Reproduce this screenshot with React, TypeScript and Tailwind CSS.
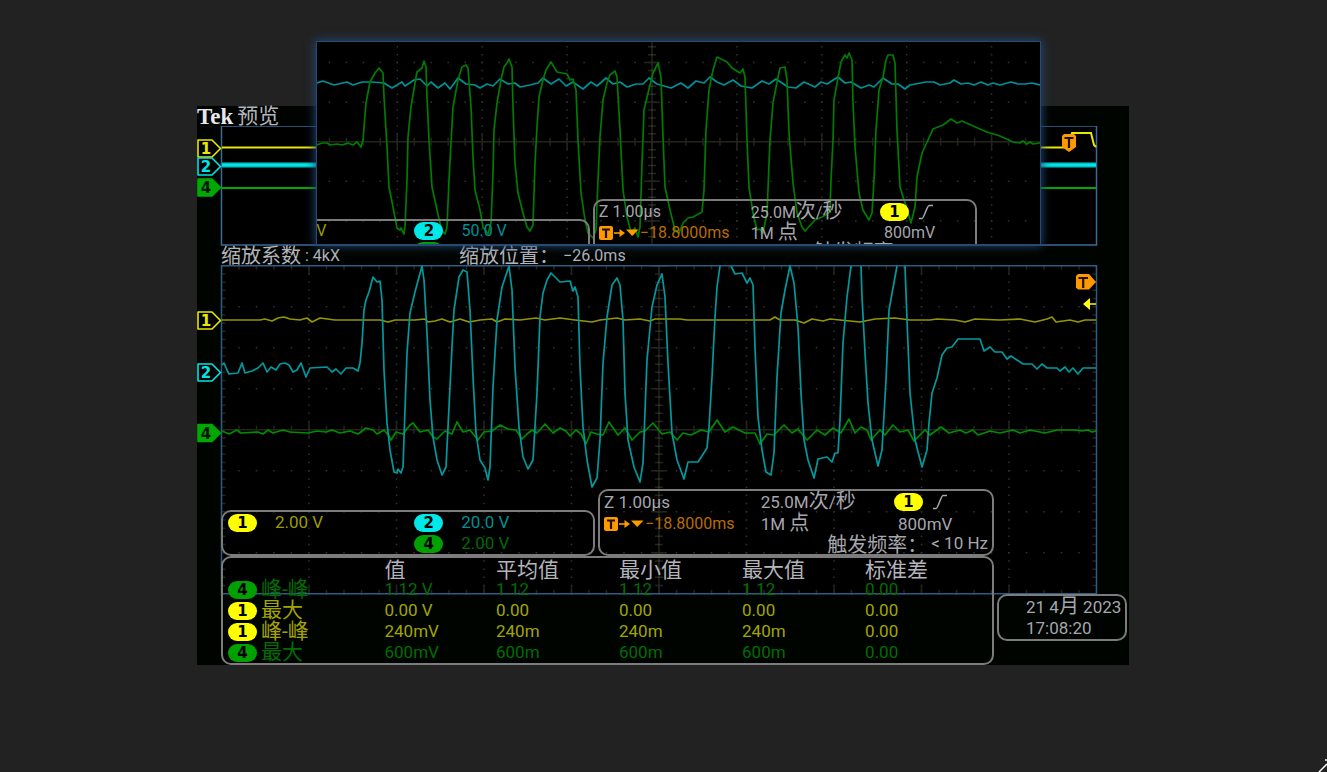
import type { ReactNode } from 'react';
import clsx from 'clsx';

const COLORS = {
  yellow: '#e8e800',
  cyan: '#00e5e5',
  green: '#00a800',
  orange: '#ff9900',
};

type Channel = 1 | 2 | 4;

const MAIN_CH1 =
  '222,320 260,320 265,319 272,321 278,318 284,317 290,319 300,320 307,318 312,322 320,318 335,320 360,320 380,320 388,322 395,320 415,320 425,319 428,322 435,321 442,319 450,322 460,319 469,322 480,320 492,319 497,322 505,319 520,320 536,318 545,320 560,318 575,320 592,322 600,320 617,318 625,320 640,319 650,321 655,319 680,319 687,320 770,320 775,317 780,320 795,320 804,323 812,319 823,321 830,319 860,322 875,319 895,318 910,320 930,320 937,319 955,320 965,322 975,319 1000,320 1020,319 1035,322 1047,319 1052,317 1056,322 1070,320 1078,322 1085,320 1096,320';

const MAIN_CH2 = [
  '222,365 224,363 227,370 229,374 238,373 242,363 245,373 252,371 258,368 263,363 267,372 271,367 276,370 280,364 285,363 289,365 293,372 297,370 301,363 306,377 310,368 327,367 332,372 336,369 341,374 346,368 353,368 358,371 360,363 362,343 364,310 366,300 369,292 373,277 377,282 380,281 382,300 384,370 387,423 390,450 394,472 397,473 398,469 401,473 403,467 405,410 407,353 410,313 415,292 422,266 424,280 427,333 430,400 433,437 437,460 442,475 446,467 448,427 452,347 454,310 459,277 463,270 467,272 470,310 473,377 476,433 480,460 485,468 488,480 490,467 493,387 497,320 502,287 509,266 512,290 515,367 519,427 523,457 528,469 533,460 537,393 540,317 543,293 547,280 551,273 560,282 570,281 573,291 575,287 578,297 580,367 583,427 587,460 592,487 597,478 600,440 603,363 607,317 612,285 617,278 620,285 623,320 625,393 628,440 634,467 640,482 643,463 647,360 652,307 657,285 662,274 665,297 668,363 672,433 677,460 684,479 688,462 698,462 707,448 709,427 712,377 715,317 717,287 720,266',
  '731,266 735,274 742,273 747,283 750,278 753,285 755,347 758,417 762,450 766,472 771,475 774,453 777,377 781,313 785,290 790,266 794,283 798,327 801,393 804,440 808,460 814,478 818,459 827,457 832,462 835,453 838,453 840,420 843,343 847,297 851,266',
  '861,266 862,297 865,353 868,403 872,440 878,466 882,450 886,380 889,310 897,266',
  '905,266 907,320 910,393 915,440 922,467 927,450 929,423 932,393 937,378 942,355 947,348 952,347 958,339 980,339 984,351 990,347 995,352 1002,352 1007,359 1011,356 1023,364 1032,364 1037,369 1042,364 1047,368 1057,368 1060,371 1065,367 1069,372 1073,368 1078,374 1083,368 1096,368',
];

const MAIN_CH4 =
  '222,431 229,434 237,430 241,433 258,432 263,434 268,430 273,433 283,430 290,432 308,433 317,431 326,432 332,430 340,433 350,431 358,434 366,428 373,430 377,434 384,430 389,436 391,440 396,432 403,434 410,425 413,423 420,432 428,430 433,437 437,439 445,431 452,434 457,422 463,432 470,430 478,440 484,432 492,431 500,425 508,429 516,430 522,439 527,434 532,430 537,433 545,424 553,433 560,428 566,431 570,436 576,430 581,434 586,444 591,432 597,434 603,435 609,422 618,435 625,428 632,440 640,432 645,431 653,423 662,434 670,432 677,440 683,433 691,435 701,430 709,432 717,420 725,432 733,427 745,433 755,433 760,444 767,434 774,435 784,425 792,433 798,429 807,440 817,430 825,435 833,428 841,433 849,419 855,433 861,427 867,430 871,440 880,430 885,435 893,425 900,432 908,430 914,441 925,430 930,435 941,427 949,433 960,430 966,433 973,430 978,435 990,431 1000,433 1013,430 1020,433 1030,430 1045,433 1057,430 1075,430 1082,431 1088,430 1092,432 1096,431';

const INSET_CH2 =
  '317,83 323,81 334,85 347,82 353,85 362,82 372,82 384,83 392,88 402,82 405,86 414,80 420,79 427,86 431,82 438,88 445,83 450,89 458,78 466,84 475,85 480,88 487,84 493,86 500,79 508,84 515,83 520,87 530,85 538,83 543,78 551,84 559,79 566,86 573,82 583,89 591,82 597,86 606,78 613,84 620,82 627,87 636,84 643,84 649,78 657,84 671,88 681,83 688,88 696,81 704,83 710,77 717,82 724,85 733,80 741,86 752,88 762,81 769,84 776,79 788,87 796,88 804,82 815,87 821,82 827,84 838,77 845,83 851,82 861,88 869,85 874,87 883,78 892,84 898,84 905,89 910,85 926,82 934,82 940,85 950,83 954,80 961,84 968,83 974,85 981,82 988,85 993,83 1000,85 1011,82 1018,84 1025,84 1032,83 1040,85';

const INSET_CH4 =
  '317,145 322,143 327,143 330,145 337,144 342,145 348,143 353,145 357,142 361,147 363,140 366,103 370,82 375,73 379,68 383,73 384,97 387,147 389,187 393,207 397,228 400,230 401,228 404,234 405,227 407,180 408,137 411,107 415,83 417,72 422,68 424,61 426,67 427,97 429,140 432,187 437,210 440,223 442,231 445,234 447,227 449,180 451,143 453,107 458,80 462,67 466,65 468,68 471,107 473,157 475,190 480,210 483,227 488,234 491,223 493,173 494,130 497,103 501,80 504,67 507,63 509,59 512,67 513,107 515,163 518,193 523,213 527,227 530,231 533,225 535,163 537,127 539,97 543,80 546,70 551,62 557,72 567,74 570,80 573,79 576,90 578,140 581,193 585,220 588,233 593,238 596,230 598,180 600,137 603,100 607,83 610,75 615,71 617,77 620,130 623,190 627,217 631,232 635,228 638,237 640,227 642,163 644,110 650,85 653,73 658,63 661,77 663,137 665,187 670,210 675,230 679,233 683,223 688,218 693,217 702,212 704,190 706,130 709,90 713,70 717,57 727,62 732,68 740,73 743,69 745,77 747,140 749,187 753,213 757,230 760,229 763,233 767,213 770,140 773,103 778,77 780,68 785,67 787,80 789,133 793,183 797,213 802,227 805,231 815,220 822,217 830,212 831,180 833,140 834,100 838,78 841,62 845,55 847,58 849,53 852,60 853,103 855,147 859,193 863,210 869,220 872,213 874,180 876,130 879,90 883,77 886,60 888,55 893,55 895,63 897,130 900,187 905,203 911,223 915,207 917,177 922,153 928,140 933,129 943,125 951,119 957,123 962,121 980,129 987,132 1000,136 1013,142 1020,143 1023,141 1027,144 1030,142 1033,144 1040,143';

const MEASUREMENTS: { ch: Channel; name: string; values: string[] }[] = [
  { ch: 4, name: '峰-峰', values: ['1.12 V', '1.12', '1.12', '1.12', '0.00'] },
  { ch: 1, name: '最大', values: ['0.00 V', '0.00', '0.00', '0.00', '0.00'] },
  { ch: 1, name: '峰-峰', values: ['240mV', '240m', '240m', '240m', '0.00'] },
  { ch: 4, name: '最大', values: ['600mV', '600m', '600m', '600m', '0.00'] },
];

function Trace({ points, color }: { points: string; color: string }) {
  return <polyline points={points} fill="none" stroke={color} strokeWidth="1.7" strokeLinejoin="round" />;
}

// Dotted division lines plus the ticked centre axes
function Graticule({ cx, cy, dx, dy, edges }: { cx: number; cy: number; dx: number; dy: number; edges?: boolean }) {
  const left = cx - 5 * dx;
  const right = cx + 5 * dx;
  const top = cy - 4 * dy;
  const bottom = cy + 4 * dy;
  const dotX = `1.5 ${dx / 5 - 1.5}`;
  const dotY = `1.5 ${dy / 5 - 1.5}`;
  return (
    <g stroke="#24241d" strokeWidth="1.5" strokeDashoffset="0.75">
      {[-4, -3, -2, -1, 1, 2, 3, 4].map((i) => (
        <line key={`v${i}`} x1={cx + i * dx} x2={cx + i * dx} y1={top} y2={bottom} stroke="#33332c" strokeDasharray={dotY} />
      ))}
      {[-3, -2, -1, 1, 2, 3].map((i) => (
        <line key={`h${i}`} x1={left} x2={right} y1={cy + i * dy} y2={cy + i * dy} stroke="#33332c" strokeDasharray={dotX} />
      ))}
      <line x1={left} x2={right} y1={cy} y2={cy} />
      <line x1={left} x2={right} y1={cy} y2={cy} strokeWidth="8" strokeDasharray={dotX} />
      <line x1={left} x2={right} y1={cy} y2={cy} strokeWidth="17" strokeDasharray={`1.5 ${dx - 1.5}`} />
      <line x1={cx} x2={cx} y1={top} y2={bottom} />
      <line x1={cx} x2={cx} y1={top} y2={bottom} strokeWidth="8" strokeDasharray={dotY} />
      <line x1={cx} x2={cx} y1={top} y2={bottom} stroke="#3e3e34" strokeDasharray={dotY} />
      <line x1={cx} x2={cx} y1={top} y2={bottom} strokeWidth="16" strokeDasharray={`1.5 ${dy - 1.5}`} />
      {edges && (
        <>
          <line x1={left} x2={right} y1={top} y2={top} strokeWidth="8" strokeDasharray={dotX} />
          <line x1={left} x2={right} y1={top} y2={top} strokeWidth="18" strokeDasharray={`1.5 ${dx - 1.5}`} />
          <line x1={left} x2={right} y1={bottom} y2={bottom} strokeWidth="8" strokeDasharray={dotX} />
          <line x1={left} x2={right} y1={bottom} y2={bottom} strokeWidth="18" strokeDasharray={`1.5 ${dx - 1.5}`} />
          <path d={`M${left + 2} ${top} V${bottom} M${right - 2} ${top} V${bottom}`} strokeWidth="4" strokeDasharray={dotY} />
        </>
      )}
    </g>
  );
}

function ChannelTag({ ch, y }: { ch: Channel; y: number }) {
  const color = ch === 1 ? COLORS.yellow : ch === 2 ? COLORS.cyan : COLORS.green;
  const solid = ch === 4;
  return (
    <g>
      <path
        d={`M198 ${y - 8.5} H212 L220.5 ${y} L212 ${y + 8.5} H198 Z`}
        fill={solid ? color : '#000'}
        stroke={color}
        strokeWidth="1.6"
        strokeLinejoin="round"
      />
      <text
        x="206"
        y={y + 5.5}
        textAnchor="middle"
        fill={solid ? '#001800' : color}
        className="font-['DejaVu_Sans'] text-[15px] font-bold"
      >
        {ch}
      </text>
    </g>
  );
}

function Badge({ ch }: { ch: Channel }) {
  return (
    <span
      className={clsx(
        "inline-flex h-[18px] w-[29px] shrink-0 items-center justify-center rounded-full font-['DejaVu_Sans'] text-[15px] leading-[18px] font-bold text-black",
        ch === 1 && 'bg-[#ffff00]',
        ch === 2 && 'bg-[#00e8e8]',
        ch === 4 && 'bg-[#00a000]'
      )}
    >
      {ch}
    </span>
  );
}

function Panel({ children, className }: { children: ReactNode; className?: string }) {
  return <div className={clsx('rounded-[10px] border-2 border-[#7c7c7c] whitespace-nowrap', className)}>{children}</div>;
}

function ChannelPanel({ ch1, ch2, ch4, rowClass }: { ch1: string; ch2: string; ch4: string; rowClass: string }) {
  return (
    <Panel className="grid grid-cols-[51%_1fr] self-end pl-[5px]">
      <div className={clsx('flex items-center gap-[18px] text-[#9c9c00]', rowClass)}>
        <Badge ch={1} />
        {ch1}
      </div>
      <div>
        <div className={clsx('flex items-center gap-[18px] text-[#008f93]', rowClass)}>
          <Badge ch={2} />
          {ch2}
        </div>
        <div className={clsx('flex items-center gap-[18px] text-[#006a00]', rowClass)}>
          <Badge ch={4} />
          {ch4}
        </div>
      </div>
    </Panel>
  );
}

function TriggerPanel({ rowClass }: { rowClass: string }) {
  return (
    <Panel className="text-[#a6a6ae]">
      <div className={clsx('grid grid-cols-[41%_34%_1fr] items-center', rowClass)}>
        <span className="pl-1">Z 1.00µs</span>
        <span>
          25.0M<span className="text-xl leading-none">次</span>/<span className="text-xl leading-none">秒</span>
        </span>
        <span className="flex items-center gap-[10px]">
          <Badge ch={1} />
          <svg width="14" height="16" viewBox="0 0 14 16" fill="none" stroke="#a6a6ae" strokeWidth="1.5">
            <path d="M0 14.5 H3 C5 14.500 8 1.500 10 1.500 H14" />
          </svg>
        </span>
      </div>
      <div className={clsx('grid grid-cols-[41%_34%_1fr] items-center', rowClass)}>
        <span className="flex items-center gap-px pl-1 text-base text-[#b86c00]">
          <svg width="40" height="16" viewBox="0 0 40 16" className="shrink-0">
            <rect x="0" y="1" width="14" height="14" rx="2" fill={COLORS.orange} />
            <path d="M3 4.5 H11 M7 4.5 V13" stroke="#201000" strokeWidth="2.2" />
            <path d="M15 8 H22" stroke={COLORS.orange} strokeWidth="1.6" />
            <path d="M20.500 4 L26 8 L20.500 12 Z M27 4.500 H39.500 L33.200 11 Z" fill={COLORS.orange} />
          </svg>
          −18.8000ms
        </span>
        <span>
          1M <span className="text-xl leading-none">点</span>
        </span>
        <span className="pl-1">800mV</span>
      </div>
      <div className={clsx('flex items-center justify-end gap-1 pr-1', rowClass)}>
        <span className="font-['Noto_Sans_CJK_SC',sans-serif] text-xl leading-5">触发频率：</span>
        <span>&lt; 10 Hz</span>
      </div>
    </Panel>
  );
}

function Overview() {
  return (
    <svg viewBox="197 126 932 120" className="block w-full">
      <rect x="221.500" y="126" width="875" height="119" fill="#000" stroke="#3d6a94" strokeWidth="1.5" />
      <polyline
        points="222,147.500 1067,147.500 1072,133 1091,133 1094,145 1096,147"
        fill="none"
        stroke={COLORS.yellow}
        strokeWidth="2"
      />
      <line x1="222" x2="1096" y1="165" y2="165" stroke="#006068" strokeWidth="6" />
      <line x1="222" x2="1096" y1="165" y2="165" stroke={COLORS.cyan} strokeWidth="3.500" />
      <line x1="222" x2="1096" y1="188" y2="188" stroke={COLORS.green} strokeWidth="2" />
      <ChannelTag ch={1} y={148.5} />
      <ChannelTag ch={2} y={166.5} />
      <ChannelTag ch={4} y={187.5} />
      <path d="M1062 136 L1064 134 H1074 L1076 136 V147 L1069 152 L1062 147 Z" fill={COLORS.orange} />
      <path d="M1064.500 138 H1073.500 M1069 138 V148" stroke="#201000" strokeWidth="2.200" />
    </svg>
  );
}

function MainPlot() {
  return (
    <svg viewBox="197 265 932 330" className="block w-full">
      <rect x="221.500" y="265.750" width="875" height="328" fill="#000" />
      <Graticule cx={659} cy={429.75} dx={87.5} dy={41} edges />
      <rect x="221.500" y="265.750" width="875" height="328" fill="none" stroke="#2f5a85" strokeWidth="1.500" />
      <Trace points={MAIN_CH1} color="#959500" />
      <Trace points={MAIN_CH4} color="#008c00" />
      {MAIN_CH2.map((points) => (
        <Trace key={points} points={points} color="#009a9e" />
      ))}
      <ChannelTag ch={1} y={320.5} />
      <ChannelTag ch={2} y={372.5} />
      <ChannelTag ch={4} y={433} />
      <path d="M1076 276 L1078 274 H1089 L1096 282 L1089 289.500 H1078 L1076 287.500 Z" fill={COLORS.orange} />
      <path d="M1078.500 278 H1088 M1083.200 278 V288" stroke="#201000" strokeWidth="2.200" />
      <path d="M1083 304 L1090 298 V310 Z M1089 303.200 H1096 V304.800 H1089 Z" fill="#ffff00" />
    </svg>
  );
}

function Inset() {
  return (
    <div className="absolute -top-16 right-[89px] left-30 grid h-[202px] overflow-hidden bg-black text-base leading-5 shadow-[0_0_0_1px_#27497a,0_0_9px_2px_#24466f]">
      <svg viewBox="317 42 723 202" className="block w-full [grid-area:1/1]">
        <Graticule cx={652} cy={141.75} dx={84.9} dy={39.6} />
        <Trace points={INSET_CH2} color="#009096" />
        <Trace points={INSET_CH4} color="#007c00" />
      </svg>
      <div className="mt-[157px] mr-[63px] -ml-[90px] grid grid-cols-[374fr_396fr] gap-[3px] self-start [grid-area:1/1]">
        <ChannelPanel ch1="2.00 V" ch2="50.0 V" ch4="2.00 V" rowClass="h-5" />
        <TriggerPanel rowClass="h-5" />
      </div>
    </div>
  );
}

function MeasurementTable() {
  return (
    <Panel>
      <table className="w-full table-fixed text-left">
        <colgroup>
          <col className="w-[21%]" />
          <col className="w-[14.5%]" />
          <col className="w-[16%]" />
          <col className="w-[16%]" />
          <col className="w-[16%]" />
          <col />
        </colgroup>
        <thead>
          <tr className="h-[21px] font-['Noto_Sans_CJK_SC',sans-serif] text-[21px] text-[#b4b4bc]">
            <td className="p-0" />
            {['值', '平均值', '最小值', '最大值', '标准差'].map((label) => (
              <th key={label} className="p-0 font-normal">
                {label}
              </th>
            ))}
          </tr>
        </thead>
        <tbody>
          {MEASUREMENTS.map(({ ch, name, values }) => (
            <tr key={`${ch}${name}`} className={clsx('h-[21px]', ch === 1 ? 'text-[#a4a400]' : 'text-[#006e00]')}>
              <th className="p-0 font-normal">
                <div className="flex h-[21px] items-center gap-1 pl-[5px] text-[21px]">
                  <Badge ch={ch} />
                  {name}
                </div>
              </th>
              {values.map((value, i) => (
                <td key={i} className="p-0">
                  {value}
                </td>
              ))}
            </tr>
          ))}
        </tbody>
      </table>
    </Panel>
  );
}

export default function App() {
  return (
    <main className="flex min-h-screen justify-center bg-[#222222] pt-[106px] pr-px font-['Roboto','Noto_Sans_CJK_SC',sans-serif]">
      <section className="relative w-full max-w-[932px] self-start bg-[#000400] text-[17px] leading-[21px]">
        <h1 className="flex h-5 items-center gap-1 text-[21px] text-[#b4b4bc]">
          <span className="font-['Liberation_Serif',serif] text-[23px] font-bold text-[#e8e8f0]">Tek</span>
          预览
        </h1>
        <Overview />
        <div className="grid h-[19px] grid-cols-[238px_1fr] pl-6 text-base leading-5 text-[#b4b4bc]">
          <div className="flex h-[19px] items-center gap-1">
            <span className="text-xl leading-5">缩放系数</span>
            <span>: 4kX</span>
          </div>
          <div className="flex h-[19px] items-center gap-1">
            <span className="text-xl leading-5">缩放位置：</span>
            <span>−26.0ms</span>
          </div>
        </div>
        <MainPlot />
        <div className="-mt-[106px] flex items-end gap-[3px] pr-[2px] pl-6">
          <div className="min-w-0 flex-1">
            <div className="grid grid-cols-[374fr_396fr] gap-[3px]">
              <ChannelPanel ch1="2.00 V" ch2="20.0 V" ch4="2.00 V" rowClass="h-[21px]" />
              <TriggerPanel rowClass="h-[21px]" />
            </div>
            <MeasurementTable />
          </div>
          <Panel className="mb-6 w-[130px] shrink-0 pl-[27px] text-[#a6a6ae]">
            <div>
              21 4<span className="text-xl leading-none">月</span> 2023
            </div>
            <time>17:08:20</time>
          </Panel>
        </div>
        <Inset />
      </section>
      <svg width="10" height="14" viewBox="0 0 10 14" className="fixed right-0 bottom-0" fill="none" stroke="#fff" strokeWidth="1.500">
        <path d="M2 14 L10 6 M8 2 H10" />
      </svg>
    </main>
  );
}
